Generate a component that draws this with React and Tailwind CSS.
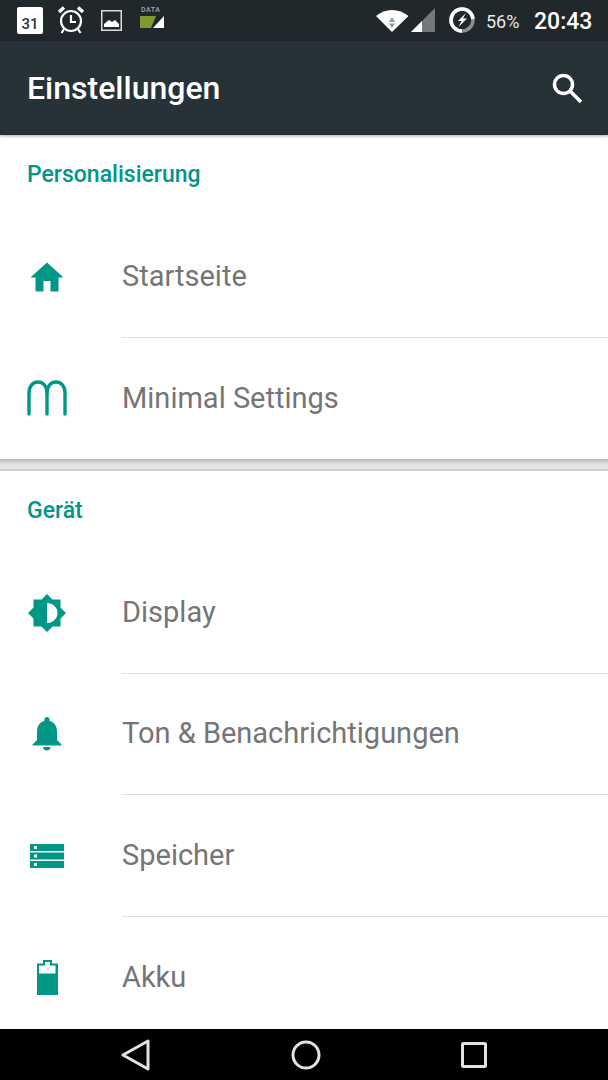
import React from 'react';

const font = { fontFamily: 'Roboto, sans-serif' };

function HomeIcon() {
  return (
    <svg width="34" height="30" viewBox="0 0 34 30" className="fill-[#009688]">
      <path d="M17 0.5 L33.5 15.5 H28.5 V29.5 H20.5 V19 H13.5 V29.5 H5.5 V15.5 H0.5 Z" />
    </svg>
  );
}

function MinimalIcon() {
  return (
    <svg width="40" height="36" viewBox="0 0 40 36" fill="none" stroke="#009688" strokeWidth="3.4" strokeLinecap="round">
      <path d="M2 34 V13 C2 6 6 2 11 2 C16 2 20 6 20 13 V34" />
      <path d="M20 13 C20 6 24 2 29 2 C34 2 38 6 38 13 V34" />
    </svg>
  );
}

function DisplayIcon() {
  return (
    <svg width="38" height="38" viewBox="0 0 38 38">
      <path
        className="fill-[#009688]"
        d="M19 0 L24.5 5.5 H32.5 V13.5 L38 19 L32.5 24.5 V32.5 H24.5 L19 38 L13.5 32.5 H5.5 V24.5 L0 19 L5.5 13.5 V5.5 H13.5 Z"
      />
      <path className="fill-white" d="M19 9 C25 9 29.5 13.5 29.5 19 C29.5 24.5 25 29 19 29 Z" />
    </svg>
  );
}

function BellIcon() {
  return (
    <svg width="30" height="34" viewBox="0 0 30 34" className="fill-[#009688]">
      <path d="M15 0 C16.6 0 17.6 1.2 17.6 2.8 V4 C22.6 5.2 25 9.4 25 14.5 V23 L29.5 27.5 V28.5 H0.5 V27.5 L5 23 V14.5 C5 9.4 7.4 5.2 12.4 4 V2.8 C12.4 1.2 13.4 0 15 0 Z" />
      <path d="M11 30 H18.5 C18.5 32.2 17 33.6 14.8 33.6 C12.6 33.6 11 32.2 11 30 Z" />
    </svg>
  );
}

function StorageIcon() {
  return (
    <svg width="34" height="24" viewBox="0 0 34 24">
      <path className="fill-[#009688]" d="M0 0 H34 V7 H0 Z M0 8.5 H34 V15.5 H0 Z M0 17 H34 V24 H0 Z" />
      <path className="fill-white" d="M4 2 H7 V5 H4 Z M4 10.5 H7 V13.5 H4 Z M4 19 H7 V22 H4 Z" />
    </svg>
  );
}

function BatteryIcon() {
  return (
    <svg width="21" height="35" viewBox="0 0 21 35">
      <path className="fill-[#009688]" d="M6 0 H15 V3.5 H21 V35 H0 V3.5 H6 Z" />
      <path className="fill-white" d="M2 5.5 H8 V2 H13 V5.5 H18.500 V13.500 H2 Z" />
    </svg>
  );
}

function StatusIcons() {
  return (
    <div className="flex items-center">
      {/* calendar */}
      <svg width="26" height="27" viewBox="0 0 26 27" className="ml-[17px]">
        <path className="fill-white" d="M2 0.500 H24 Q26 0.500 26 2.500 V25 Q26 27 24 27 H2 Q0 27 0 25 V2.500 Q0 0.500 2 0.500 Z" />
        <rect x="5" y="2.500" width="2" height="2" fill="#3a4144" />
        <rect x="19" y="2.500" width="2" height="2" fill="#3a4144" />
      </svg>
    </div>
  );
}

function StatusBar() {
  return (
    <div className="relative h-[41px] shrink-0 bg-[#20282c]" style={font}>
      <div className="absolute left-[17px] top-[7px] h-[27px] w-[26px] rounded-[2px] bg-white text-center text-[15px] font-medium leading-[34px] text-[#263238]">
        31
      </div>
      <svg width="28" height="30" viewBox="0 0 28 30" fill="none" stroke="white" className="absolute left-[57px] top-[5px]">
        <circle cx="14" cy="16" r="10" strokeWidth="2.2" />
        <path d="M14 10 V17 H19" strokeWidth="2.2" />
        <path d="M2 7 L7 2.500 M26 7 L21 2.500" strokeWidth="3.500" />
        <path d="M7 24 L4.500 28 M21 24 L23.500 28" strokeWidth="2.200" />
      </svg>
      <svg width="21" height="21" viewBox="0 0 21 21" className="absolute left-[101px] top-[10px]">
        <rect x="0.750" y="0.750" width="19.500" height="19.500" fill="none" stroke="#d8dadb" strokeWidth="1.500" />
        <path fill="white" d="M3 17 V14 L8 10 L11 12 L14 10 L18 14 V17 Z" />
      </svg>
      <span className="absolute left-[141px] top-[6px] text-[7px] font-medium leading-[9px] tracking-[0.5px] text-[#a5a9ab]">DATA</span>
      <svg width="25" height="13" viewBox="0 0 25 13" className="absolute left-[140px] top-[16px]">
        <path fill="#7f9a2e" d="M0 0 H16 L11 12 H0 Z" />
        <path fill="white" d="M24 0 V12 H13 Z" />
      </svg>
      <svg width="34" height="25" viewBox="0 0 34 25" className="absolute left-[376px] top-[8px]">
        <path fill="white" d="M0 8 C9 0 23 0 32.500 8 L16 24 Z" />
        <path fill="#90979a" d="M16 9 L19 14 H13 Z M13 15.500 H19 L16 20 Z" />
      </svg>
      <svg width="25" height="24" viewBox="0 0 25 24" className="absolute left-[411px] top-[8px]">
        <path fill="#72787b" d="M24 0 V24 H0 Z" />
        <path fill="white" d="M11 13 V24 H0 Z" />
      </svg>
      <svg width="28" height="28" viewBox="0 0 28 28" fill="none" className="absolute left-[448px] top-[6px]">
        <circle cx="14" cy="14" r="11" stroke="#8b9092" strokeWidth="3.500" />
        <path d="M14 25 A11 11 0 0 1 14 3 A11 11 0 0 1 25 13" stroke="white" strokeWidth="3.500" />
        <path fill="white" d="M18 7 L10 15 H13.500 L10.500 21 L19 12.500 H15 Z" />
      </svg>
      <span className="absolute left-[486px] top-[11px] text-[18px] leading-[21px] text-[#e8e9ea]">56%</span>
      <span className="absolute left-[534px] top-[8px] text-[23px] font-medium leading-[27px] text-white">20:43</span>
    </div>
  );
}

function Toolbar() {
  return (
    <div className="relative z-10 flex h-[94px] shrink-0 items-center justify-between bg-[#263238] pl-[27px] pr-[25px] shadow-[0_1px_3px_rgba(0,0,0,0.35)]">
      <h1 className="text-[32px] font-medium leading-none text-white" style={font}>Einstellungen</h1>
      <svg width="32" height="32" viewBox="0 0 32 32" fill="none" stroke="white" strokeWidth="3.500">
        <circle cx="12.500" cy="12.500" r="9" />
        <path d="M19 19 L30 30" />
      </svg>
    </div>
  );
}

function Row({ icon, label, divider }) {
  return (
    <div className="flex h-[121.5px] items-center" style={font}>
      <div className="flex w-[122px] shrink-0 items-center pl-[27px]">
        <div className="flex w-[40px] justify-center">{icon}</div>
      </div>
      <div className={`flex h-full flex-1 items-center ${divider ? 'border-b border-b-[#dfdfdf]' : ''}`}>
        <span className="text-[29px] leading-none text-[#757575]">{label}</span>
      </div>
    </div>
  );
}

function SectionTitle({ children }) {
  return (
    <div className="flex h-[81px] items-center pl-[27px] text-[23px] font-medium text-[#009688]" style={font}>
      {children}
    </div>
  );
}

export default function App() {
  return (
    <div className="flex h-[1080px] w-[608px] flex-col overflow-hidden bg-white">
      <StatusBar />
      <Toolbar />
      <div className="min-h-0 flex-1">
        <SectionTitle>Personalisierung</SectionTitle>
        <Row icon={<HomeIcon />} label="Startseite" divider />
        <Row icon={<MinimalIcon />} label="Minimal Settings" />
        <div className="h-[12px] border-b-2 border-b-[#cfcfcf] bg-gradient-to-b from-[#b5b5b5] via-[#e2e2e2] to-[#e6e6e6]" />
        <SectionTitle>Gerät</SectionTitle>
        <Row icon={<DisplayIcon />} label="Display" divider />
        <Row icon={<BellIcon />} label="Ton & Benachrichtigungen" divider />
        <Row icon={<StorageIcon />} label="Speicher" divider />
        <Row icon={<BatteryIcon />} label="Akku" />
      </div>
      <div className="flex h-[51px] shrink-0 items-center justify-between bg-black pl-[121px] pr-[121px]">
        <svg width="30" height="32" viewBox="0 0 30 32" fill="none" stroke="#e2e2e2" strokeWidth="3" strokeLinejoin="round">
          <path d="M27 2 V30 L2 16 Z" />
        </svg>
        <svg width="30" height="30" viewBox="0 0 30 30" fill="none" stroke="#e2e2e2" strokeWidth="3">
          <circle cx="15" cy="15" r="13" />
        </svg>
        <svg width="26" height="26" viewBox="0 0 26 26" fill="none" stroke="#e2e2e2" strokeWidth="3" strokeLinejoin="round">
          <rect x="1.500" y="1.500" width="23" height="23" rx="1" />
        </svg>
      </div>
    </div>
  );
}
